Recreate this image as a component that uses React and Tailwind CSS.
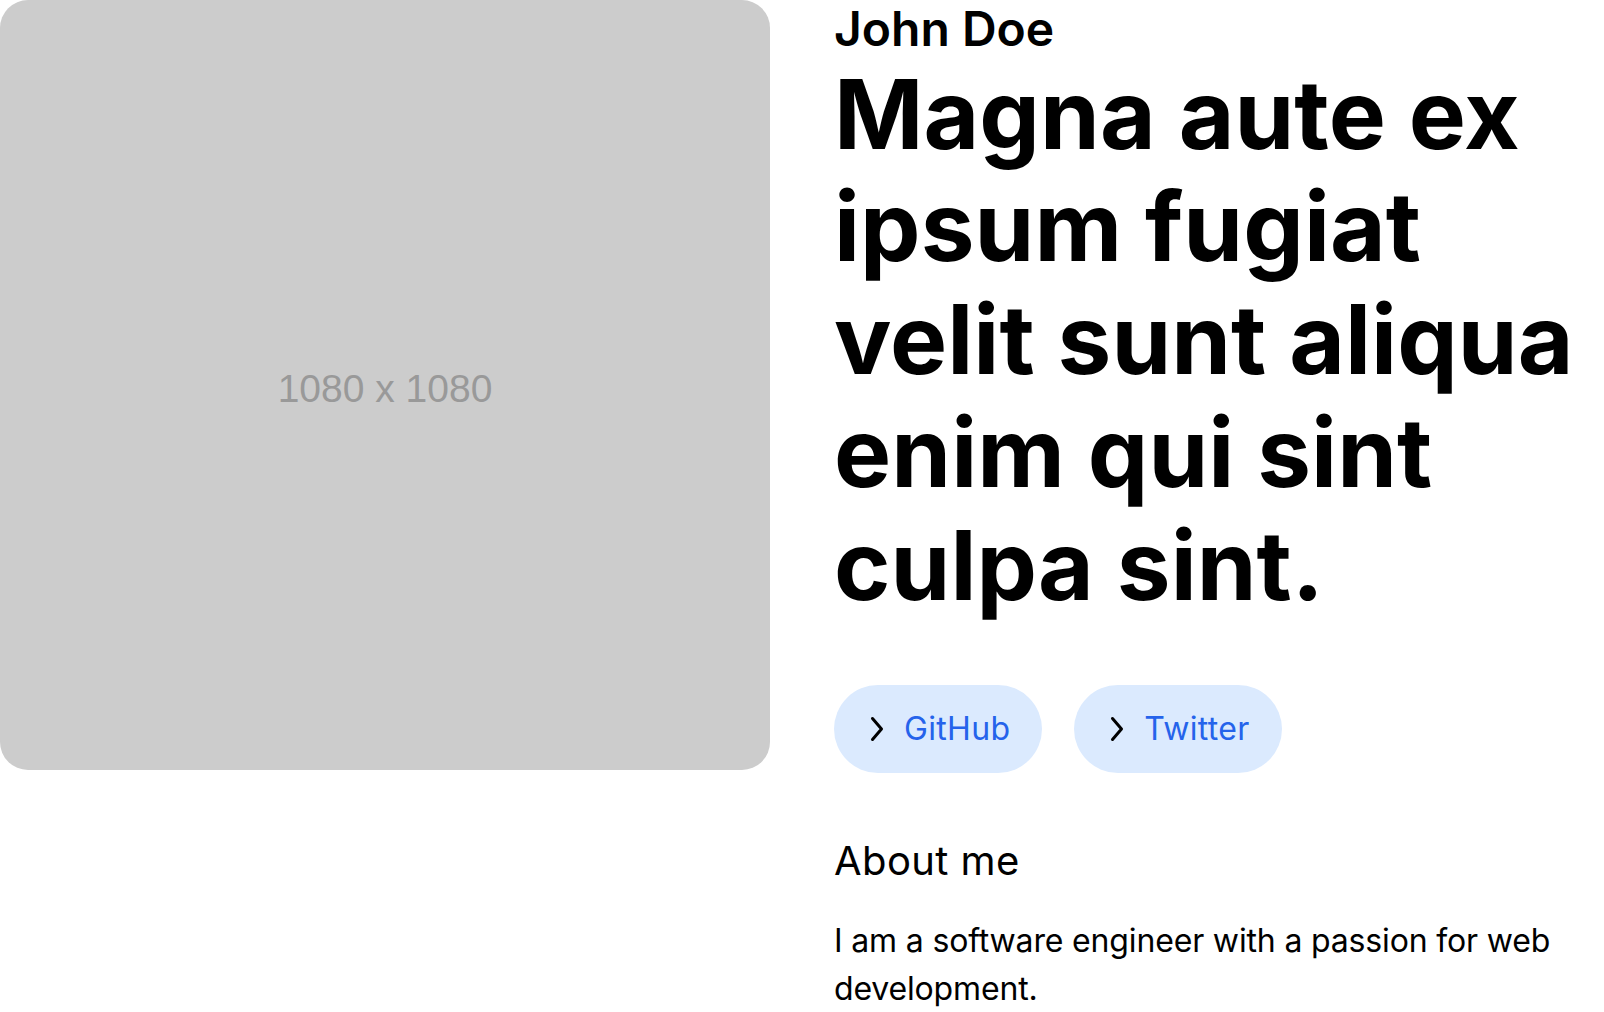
import React from "react";

const links = [
  { label: "GitHub", href: "#" },
  { label: "Twitter", href: "#" },
];

function Chevron() {
  return (
    <svg width="14" height="26" viewBox="0 0 14 26" fill="none" stroke="currentColor" strokeWidth={3} strokeLinecap="round" strokeLinejoin="round">
      <path d="M2.5 2.5 L11.5 13 L2.5 23.5" />
    </svg>
  );
}

export default function App() {
  return (
    <div className="min-h-screen bg-white text-black font-['Inter',sans-serif]">
      <div className="grid grid-cols-2 gap-16 items-start">
        {/* Placeholder image */}
        <div className="aspect-square w-full rounded-[28px] bg-[#cccccc] flex items-center justify-center pt-2">
          <span className="font-['Liberation_Sans',Arial,sans-serif] text-[39px] text-[#999999]">1080 x 1080</span>
        </div>

        <div className="flex flex-col">
          <p className="text-[48px] leading-[1.2] font-semibold">John Doe</p>
          <h1 className="text-[96px] leading-[112.75px] font-bold tracking-[0.001em]">
            Magna aute ex ipsum fugiat velit sunt aliqua enim qui sint culpa sint.
          </h1>

          <div className="mt-16 flex gap-8">
            {links.map((l) => (
              <a
                key={l.label}
                href={l.href}
                className="h-[88px] flex items-center gap-[20px] pl-[36px] pr-8 rounded-full bg-[#dbeafe] text-[32px] tracking-[0.01em] text-[#2563eb]"
              >
                <span className="text-black">
                  <Chevron />
                </span>
                {l.label}
              </a>
            ))}
          </div>

          <h2 className="mt-16 text-[40px] leading-[1.2] tracking-[0.01em]">About me</h2>
          <p className="mt-[32px] text-[32px] leading-[48px] tracking-[-0.005em]">
            I am a software engineer with a passion for web development.
          </p>
        </div>
      </div>
    </div>
  );
}
